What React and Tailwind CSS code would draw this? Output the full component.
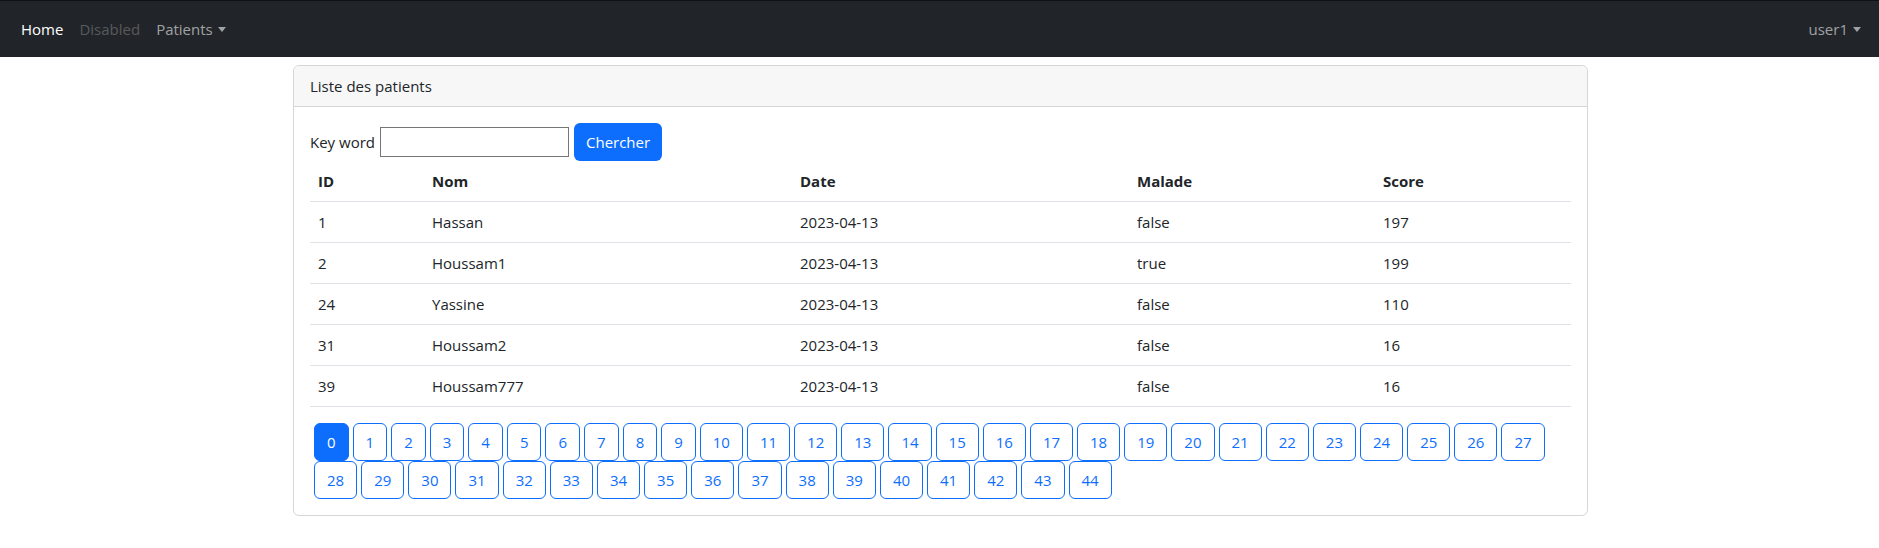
import React from "react";

const patients = [
  { id: 1, nom: "Hassan", date: "2023-04-13", malade: "false", score: 197 },
  { id: 2, nom: "Houssam1", date: "2023-04-13", malade: "true", score: 199 },
  { id: 24, nom: "Yassine", date: "2023-04-13", malade: "false", score: 110 },
  { id: 31, nom: "Houssam2", date: "2023-04-13", malade: "false", score: 16 },
  { id: 39, nom: "Houssam777", date: "2023-04-13", malade: "false", score: 16 },
];

const pages = Array.from({ length: 45 }, (_, i) => i);

function Caret() {
  return (
    <span className="ml-[5px] inline-block h-0 w-0 border-x-[4.5px] border-t-[5px] border-x-transparent border-t-current align-[3px]" />
  );
}

function Navbar() {
  return (
    <nav className="flex h-[57px] items-center justify-between border-t border-[#0f1113] bg-[#212529] pl-[13px] pr-[10px]">
      <ul className="flex items-center">
        <li>
          <a className="block px-2 py-2 text-white">Home</a>
        </li>
        <li>
          <a className="block px-2 py-2 text-[#58595b]">Disabled</a>
        </li>
        <li>
          <a className="block px-2 py-2 text-[#a0a2a4]">
            Patients
            <Caret />
          </a>
        </li>
      </ul>
      <ul className="flex items-center">
        <li>
          <a className="block px-2 py-2 text-[#a0a2a4]">
            user1
            <Caret />
          </a>
        </li>
      </ul>
    </nav>
  );
}

export default function App() {
  return (
    <div className="min-h-screen bg-white font-['Open_Sans','Noto_Sans',sans-serif] text-[15px] leading-6 text-[#212529]">
      <Navbar />

      <div className="mt-2 ml-[293px] w-[1295px] rounded-md border border-[#d6d6d6]">
        <div className="rounded-t-md border-b border-[#d6d6d6] bg-[#f7f7f7] px-4 py-2">
          Liste des patients
        </div>
        <div className="p-4">
          <form className="flex items-center">
            <label>Key word</label>
            <input
              type="text"
              className="ml-[5px] h-[30px] w-[189px] border border-[#767676] bg-white px-1 outline-none"
            />
            <button
              type="button"
              className="ml-[5px] h-[38px] rounded-md bg-[#0d6efd] px-3 text-white"
            >
              Chercher
            </button>
          </form>

          <table className="mb-4 w-full table-fixed border-collapse">
            <colgroup>
              <col className="w-[114px]" />
              <col className="w-[368px]" />
              <col className="w-[337px]" />
              <col className="w-[246px]" />
              <col />
            </colgroup>
            <thead>
              <tr className="border-b border-[#dee2e6]">
                <th className="p-2 text-left font-bold">ID</th>
                <th className="p-2 text-left font-bold">Nom</th>
                <th className="p-2 text-left font-bold">Date</th>
                <th className="p-2 text-left font-bold">Malade</th>
                <th className="p-2 text-left font-bold">Score</th>
              </tr>
            </thead>
            <tbody>
              {patients.map((p) => (
                <tr key={p.id} className="border-b border-[#dee2e6]">
                  <td className="p-2">{p.id}</td>
                  <td className="p-2">{p.nom}</td>
                  <td className="p-2">{p.date}</td>
                  <td className="p-2">{p.malade}</td>
                  <td className="p-2">{p.score}</td>
                </tr>
              ))}
            </tbody>
          </table>

          <ul className="flex flex-wrap">
            {pages.map((n) => (
              <li key={n}>
                <a
                  className={
                    n === 0
                      ? "ml-1 flex h-[38px] items-center rounded-md border border-[#0d6efd] bg-[#0d6efd] px-3 text-white"
                      : "ml-1 flex h-[38px] items-center rounded-md border border-[#0d6efd] px-3 text-[#0d6efd]"
                  }
                >
                  {n}
                </a>
              </li>
            ))}
          </ul>
        </div>
      </div>
    </div>
  );
}
